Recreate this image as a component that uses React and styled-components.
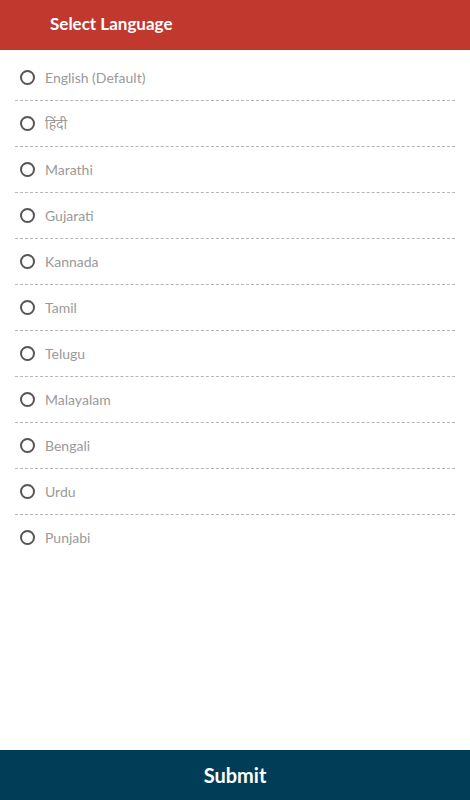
import React, { useState } from 'react';
import styled, { createGlobalStyle } from 'styled-components';

const languages = [
  'English (Default)',
  'हिंदी',
  'Marathi',
  'Gujarati',
  'Kannada',
  'Tamil',
  'Telugu',
  'Malayalam',
  'Bengali',
  'Urdu',
  'Punjabi',
];

function App() {
  const [selected, setSelected] = useState(null);

  return (
    <Page>
      <GlobalStyle />
      <Header>Select Language</Header>
      <List>
        {languages.map((lang, i) => (
          <Row key={lang} last={i === languages.length - 1} onClick={() => setSelected(i)}>
            <Radio checked={selected === i} />
            <Label>{lang}</Label>
          </Row>
        ))}
      </List>
      <Footer>Submit</Footer>
    </Page>
  );
}

const GlobalStyle = createGlobalStyle`
  html, body {
    margin: 0;
    padding: 0;
    background: #fff;
  }
  body {
    font-family: Lato, "Noto Sans", sans-serif;
  }
`;

const Page = styled.div`
  display: flex;
  flex-direction: column;
  height: 800px;
  width: 470px;
`;

const Header = styled.div`
  height: 50px;
  background-color: #c0382e;
  color: #fff;
  font-size: 17px;
  font-weight: 700;
  display: flex;
  align-items: center;
  padding: 0 0 3px 50px;
  box-sizing: border-box;
`;

const List = styled.div`
  flex: 1;
  padding: 5px 15px 0;
  display: flex;
  flex-direction: column;
`;

const Row = styled.div`
  box-sizing: border-box;
  height: 46px;
  padding-bottom: 1px;
  display: flex;
  align-items: center;
  border-bottom: ${(props) => (props.last ? 'none' : '1px dashed #b5b5b5')};
  cursor: pointer;
`;

const Radio = styled.span`
  width: 11px;
  height: 11px;
  border-radius: 50%;
  border: 2px solid #555;
  margin-left: 5px;
  margin-right: 10px;
  background: ${(props) => (props.checked ? 'radial-gradient(circle, #555 0 3px, transparent 3.5px)' : 'transparent')};
  flex-shrink: 0;
`;

const Label = styled.span`
  color: #9a9a9a;
  font-size: 14px;
`;

const Footer = styled.div`
  height: 50px;
  background-color: #023d57;
  color: #fff;
  font-size: 20px;
  font-weight: 700;
  display: flex;
  align-items: center;
  justify-content: center;
`;

export default App;
